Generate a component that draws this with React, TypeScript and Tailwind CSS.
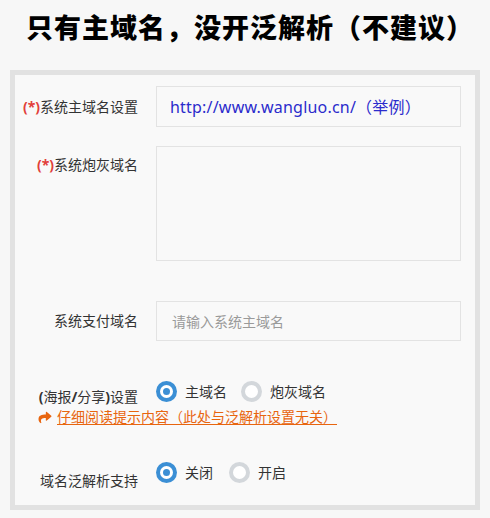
import React from "react";
import { FaShare } from "react-icons/fa";

const font = { fontFamily: '"Noto Sans", "Noto Sans CJK SC", sans-serif' };

function Radio({ checked, label }: { checked: boolean; label: string }) {
  return (
    <div className="flex items-center">
      {checked ? (
        <span className="flex h-[21px] w-[21px] items-center justify-center rounded-full bg-[#3b8fd5]">
          <span className="flex h-[13px] w-[13px] items-center justify-center rounded-full bg-white">
            <span className="h-[7px] w-[7px] rounded-full bg-[#3b8fd5]" />
          </span>
        </span>
      ) : (
        <span className="h-[21px] w-[21px] rounded-full border-[4px] border-[#d3d7db] bg-white" />
      )}
      <span className="ml-[8px] text-[14px] leading-[20px] text-[#333]">{label}</span>
    </div>
  );
}

function Label({ req, children }: { req?: boolean; children: React.ReactNode }) {
  return (
    <div className="w-[123px] shrink-0 text-right text-[14px] leading-[20px] text-[#333]">
      {req && <span className="font-bold text-[#e2403a]">(*)</span>}
      {children}
    </div>
  );
}

export default function App() {
  return (
    <div className="h-[518px] w-[490px] bg-[#f7f7f7]" style={font}>
      <div
        className="pl-[10px] pt-[9px] text-center text-[27px] font-black leading-[36px] tracking-[1px] text-black"
        style={{ fontFamily: '"Noto Sans CJK SC", sans-serif' }}
      >
        只有主域名，没开泛解析（不建议）
      </div>
      <div className="mx-[10px] mt-[25px] h-[440px] border-[5px] border-[#e2e2e2] bg-[#f9f9f9] pt-[11px]">
        <div className="flex items-center">
          <Label req>系统主域名设置</Label>
          <div className="ml-[18px] flex h-[41px] w-[305px] items-center border border-[#e3e3e3] bg-[#f9f9f9] pl-[13px] text-[16px] tracking-[0.2px] text-[#2b2bcc]">
            http://www.wangluo.cn/（举例）
          </div>
        </div>
        <div className="mt-[19px] flex items-start">
          <div className="mt-[9px]">
            <Label req>系统炮灰域名</Label>
          </div>
          <div className="ml-[18px] h-[115px] w-[305px] border border-[#e3e3e3] bg-[#f9f9f9]" />
        </div>
        <div className="mt-[40px] flex items-center">
          <Label>系统支付域名</Label>
          <div className="ml-[18px] flex h-[40px] w-[305px] items-center border border-[#e3e3e3] bg-[#f9f9f9] pl-[15px] text-[14px] text-[#9a9a9a]">
            请输入系统主域名
          </div>
        </div>
        <div className="mt-[40px] flex items-start">
          <div className="mt-[6px]">
            <Label>
              <span className="font-bold">(</span>海报<span className="font-bold">/</span>分享<span className="font-bold">)</span>设置
            </Label>
          </div>
          <div className="ml-[18px] flex gap-[14px]">
            <Radio checked label="主域名" />
            <Radio checked={false} label="炮灰域名" />
          </div>
        </div>
        <div className="ml-[23px] flex items-center text-[14px] leading-[20px] text-[#e8650f]">
          <FaShare className="h-[13px] w-[14px]" />
          <span className="ml-[5px] underline underline-offset-2">仔细阅读提示内容（此处与泛解析设置无关）</span>
        </div>
        <div className="mt-[35px] flex items-start">
          <div className="mt-[9px]">
            <Label>域名泛解析支持</Label>
          </div>
          <div className="ml-[18px] flex gap-[16px]">
            <Radio checked label="关闭" />
            <Radio checked={false} label="开启" />
          </div>
        </div>
      </div>
    </div>
  );
}
